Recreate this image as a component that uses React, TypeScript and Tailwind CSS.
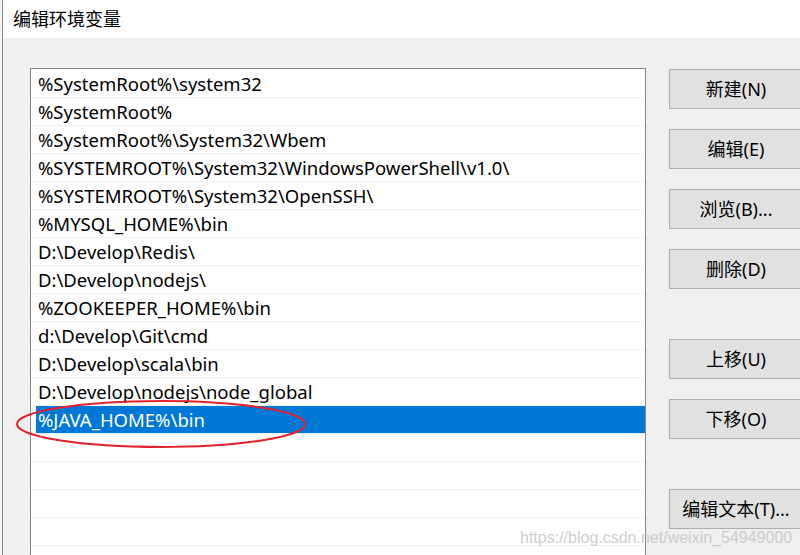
import React from 'react';

const paths = [
  '%SystemRoot%\\system32',
  '%SystemRoot%',
  '%SystemRoot%\\System32\\Wbem',
  '%SYSTEMROOT%\\System32\\WindowsPowerShell\\v1.0\\',
  '%SYSTEMROOT%\\System32\\OpenSSH\\',
  '%MYSQL_HOME%\\bin',
  'D:\\Develop\\Redis\\',
  'D:\\Develop\\nodejs\\',
  '%ZOOKEEPER_HOME%\\bin',
  'd:\\Develop\\Git\\cmd',
  'D:\\Develop\\scala\\bin',
  'D:\\Develop\\nodejs\\node_global',
  '%JAVA_HOME%\\bin',
];

const font = { fontFamily: '"Noto Sans", "Noto Sans CJK SC", sans-serif' };

function Btn({ label, className = '' }: { label: string; className?: string }) {
  return (
    <div
      className={`w-[134px] h-[40px] shrink-0 flex items-center justify-center bg-[#e1e1e1] border border-[#adadad] text-[18px] text-black ${className}`}
    >
      {label}
    </div>
  );
}

export default function App() {
  const selected = paths.length - 1;
  return (
    <div className="w-[800px] h-[555px] overflow-hidden relative flex bg-[#f0f0f0]" style={font}>
      {/* 後ろのウィンドウの縁 */}
      <div className="w-[3px] h-full shrink-0 border-r border-[#8a8a8a] bg-[#f5f5f5]" />
      <div className="flex-1 flex flex-col min-w-0">
        <div className="h-[38px] shrink-0 bg-white pl-[10px] flex items-center text-[18px] text-black">
          编辑环境变量
        </div>
        <div className="flex-1 flex pl-[27px] pt-[30px] gap-[23px] min-h-0">
          <div className="w-[616px] shrink-0 border border-[#828790] bg-white pt-[1px] h-[600px]">
            {paths.map((p, i) => (
              <div key={i} className="h-[28px] border-b border-[#f0f0f0] flex">
                <div
                  className={`flex-1 flex items-center ml-[5px] pl-[2px] pt-[1px] text-[18.5px] leading-none whitespace-nowrap ${
                    i === selected ? 'bg-[#0078d7] text-white' : 'text-black'
                  }`}
                >
                  {p}
                </div>
              </div>
            ))}
            {[0, 1, 2, 3, 4].map((i) => (
              <div key={'e' + i} className="h-[28px] border-b border-[#f0f0f0]" />
            ))}
          </div>
          <div className="flex flex-col pt-[1px] gap-[20px]">
            <Btn label="新建(N)" />
            <Btn label="编辑(E)" />
            <Btn label="浏览(B)..." />
            <Btn label="删除(D)" />
            <Btn label="上移(U)" className="mt-[30px]" />
            <Btn label="下移(O)" />
            <Btn label="编辑文本(T)..." className="mt-[30px]" />
          </div>
        </div>
      </div>

      {/* 赤い丸印 */}
      <svg className="absolute left-0 top-0 pointer-events-none" width="800" height="555">
        <ellipse cx="161" cy="424" rx="144" ry="23" fill="none" stroke="#e3202c" strokeWidth="2" />
      </svg>

      <div
        className="absolute left-[520px] top-[526px] text-[16px] text-[#c4c4c4] opacity-80 whitespace-nowrap"
        style={{ fontFamily: '"Liberation Sans", Arial, sans-serif' }}
      >
        https://blog.csdn.net/weixin_54949000
      </div>
    </div>
  );
}
